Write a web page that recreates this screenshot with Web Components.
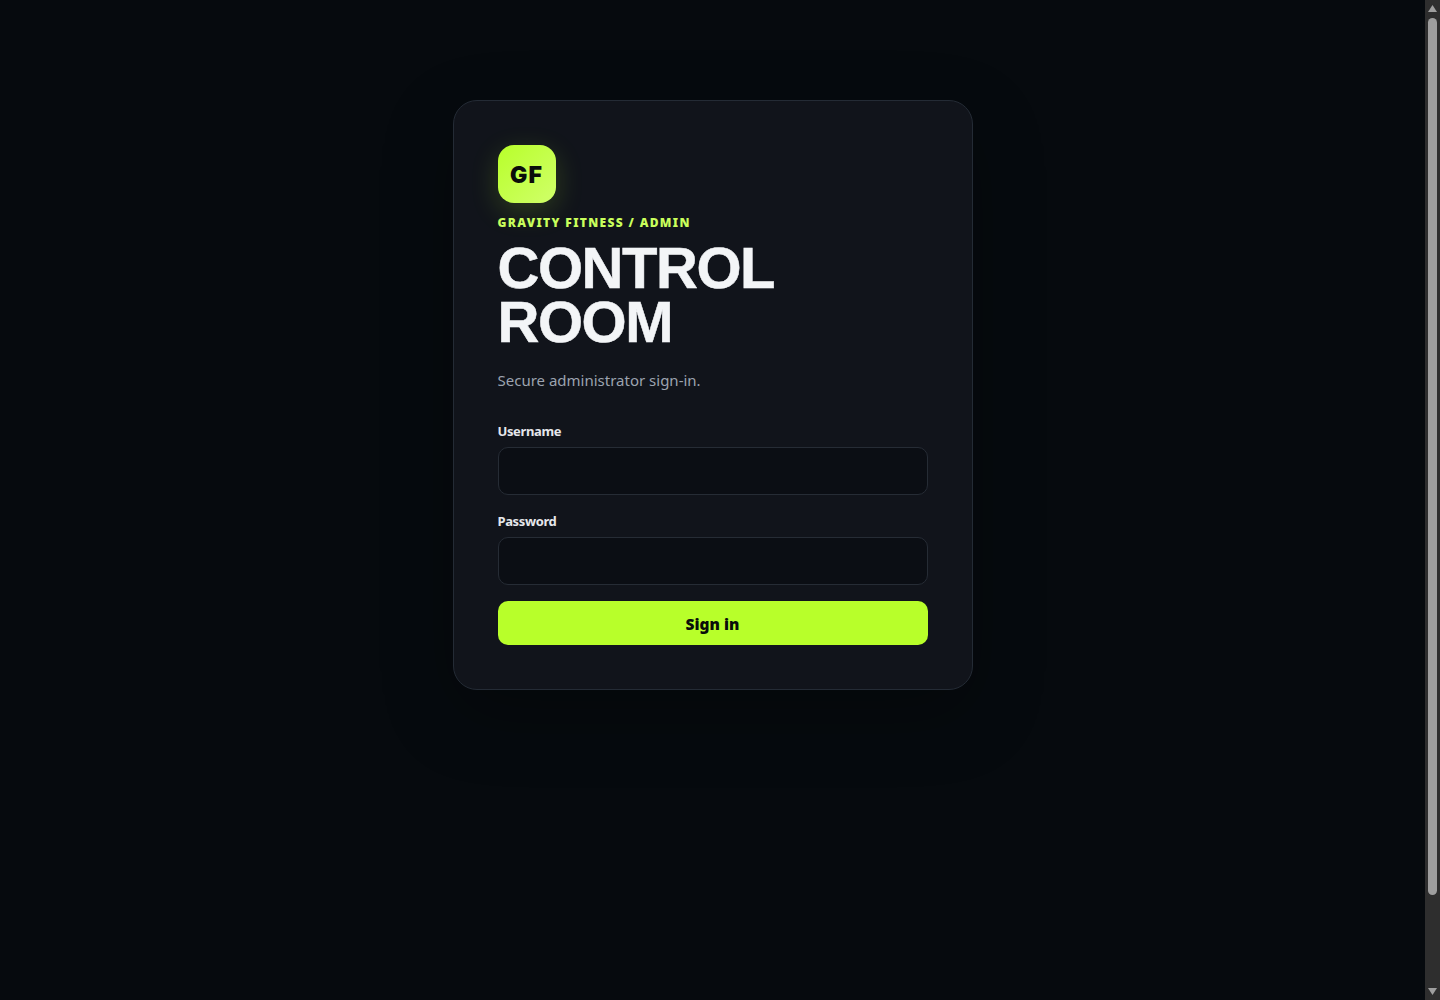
<!DOCTYPE html>
<html lang="en">
<head>
<meta charset="utf-8">
<title>Control Room</title>
<style>
  html, body { height: 100%; }
  body { margin: 0; overflow: hidden; background: #060a0e; color: #f3f5f7; font-family: "Noto Sans", "Open Sans", sans-serif; }
</style>
</head>
<body>
<login-page>
  <login-card>
    <gf-logo slot="logo">GF</gf-logo>
    <span slot="eyebrow">GRAVITY FITNESS / ADMIN</span>
    <span slot="title">CONTROL<br>ROOM</span>
    <span slot="sub">Secure administrator sign-in.</span>
    <login-field label="Username" type="text"></login-field>
    <login-field label="Password" type="password"></login-field>
    <login-button>Sign in</login-button>
  </login-card>
</login-page>
<script>
class LoginPage extends HTMLElement {
  connectedCallback() {
    this.attachShadow({ mode: 'open' });
    this.shadowRoot.innerHTML = `
      <style>
        :host { display: flex; height: 100%; overflow: hidden; }
        main { flex: 1; min-width: 0; display: flex; justify-content: center; align-items: flex-start; padding-top: 100px; }
        .bar { flex: none; display: flex; flex-direction: column; align-items: center; width: 15px; background: #2e2e2e; position: relative; z-index: 1; }
        .bar svg { display: block; flex: none; width: 15px; height: 17px; fill: #9e9e9e; }
        .track { flex: 1; width: 100%; display: flex; justify-content: center; }
        .thumb { width: 9px; height: 877px; margin-top: 1px; border-radius: 5px; background: #9e9e9e; }
      </style>
      <main><slot></slot></main>
      <div class="bar">
        <svg viewBox="0 0 15 17"><path d="M7.5 5 12 12H3z"/></svg>
        <div class="track"><div class="thumb"></div></div>
        <svg viewBox="0 0 15 17"><path d="M3 5h9l-4.500 7z"/></svg>
      </div>`;
  }
}
class LoginCard extends HTMLElement {
  connectedCallback() {
    this.attachShadow({ mode: 'open' });
    this.shadowRoot.innerHTML = `
      <style>
        :host { display: block; box-sizing: border-box; width: 520px; padding: 44px; background: #11141b; border: 1px solid #242b35; border-radius: 24px; box-shadow: 0 24px 70px rgba(0,0,0,.26); }
        .eyebrow { margin-top: 12px; font-size: 12px; line-height: 16px; font-weight: 900; letter-spacing: 1.35px; color: #c9ff5c; }
        h1 { margin: 10px 0 0; font: 700 58px/54px "Liberation Sans", Arial, sans-serif; letter-spacing: -1.45px; -webkit-text-stroke: .5px #f3f5f7; color: #f3f5f7; }
        p { margin: 19px 0 29px; font-size: 15px; line-height: 24px; color: #9ca3af; }
        .fields { display: flex; flex-direction: column; gap: 16px; }
      </style>
      <slot name="logo"></slot>
      <div class="eyebrow"><slot name="eyebrow"></slot></div>
      <h1><slot name="title"></slot></h1>
      <p><slot name="sub"></slot></p>
      <div class="fields"><slot></slot></div>`;
  }
}
class GfLogo extends HTMLElement {
  connectedCallback() {
    this.attachShadow({ mode: 'open' });
    this.shadowRoot.innerHTML = `
      <style>
        :host { display: flex; align-items: center; justify-content: center; box-sizing: border-box; width: 58px; height: 58px; padding-top: 2px; border-radius: 16px; background: linear-gradient(135deg, #b8ff2a, #d0ff6a); box-shadow: 0 8px 28px rgba(184,255,42,.18); color: #0a0d0a; font: 900 23px Inter, "Noto Sans", sans-serif; letter-spacing: 1.2px; }
      </style>
      <slot></slot>`;
  }
}
class LoginField extends HTMLElement {
  connectedCallback() {
    this.attachShadow({ mode: 'open' });
    this.shadowRoot.innerHTML = `
      <style>
        :host { display: block; }
        label { display: block; margin-bottom: 6px; font-size: 13px; line-height: 20px; font-weight: 700; letter-spacing: -.38px; color: #e5e7eb; }
        input { display: block; box-sizing: border-box; width: 100%; height: 48px; padding: 0 14px; background: #0b0e14; border: 1px solid #262c35; border-radius: 10px; color: #f3f5f7; font: inherit; outline: none; }
      </style>
      <label for="f">${this.getAttribute('label')}</label>
      <input id="f" type="${this.getAttribute('type')}">`;
  }
}
class LoginButton extends HTMLElement {
  connectedCallback() {
    this.attachShadow({ mode: 'open' });
    this.shadowRoot.innerHTML = `
      <style>
        :host { display: block; }
        button { display: block; width: 100%; height: 44px; padding: 1px 0 0; border: 0; border-radius: 10px; background: #b8ff2a; color: #0a0d0a; font: 900 15.500px "Noto Sans", "Open Sans", sans-serif; cursor: pointer; }
      </style>
      <button type="submit"><slot></slot></button>`;
  }
}
customElements.define('login-page', LoginPage);
customElements.define('login-card', LoginCard);
customElements.define('gf-logo', GfLogo);
customElements.define('login-field', LoginField);
customElements.define('login-button', LoginButton);
</script>
</body>
</html>
